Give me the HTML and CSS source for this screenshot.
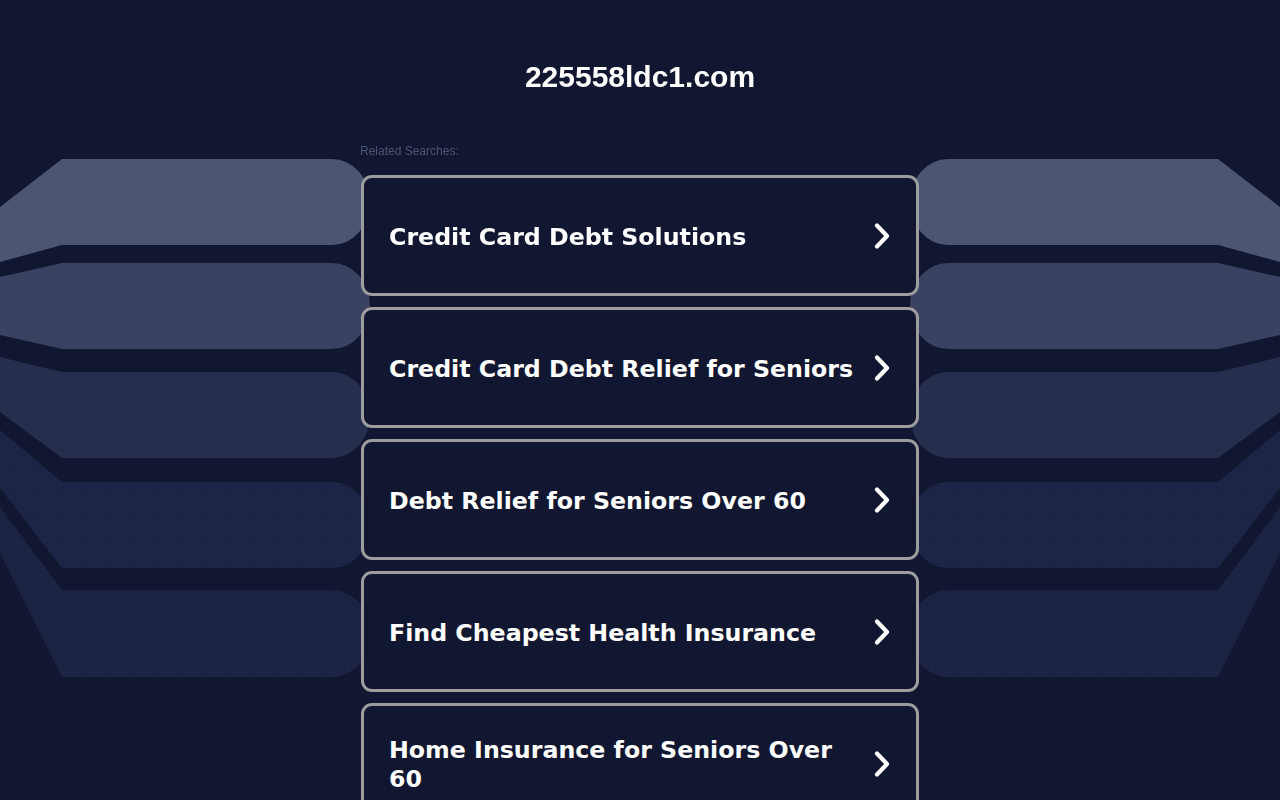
FILE: index.html
```html
<!DOCTYPE html>
<html lang="en">
<head>
<meta charset="utf-8">
<title>225558ldc1.com</title>
<link rel="stylesheet" href="styles.css">
</head>
<body>
<svg class="backdrop" width="1280" height="800" viewBox="0 0 1280 800" aria-hidden="true">
  <defs>
    <pattern id="dots" width="3" height="3" patternUnits="userSpaceOnUse">
      <rect width="3" height="3" fill="#1c2445"/>
      <rect x="1" y="1" width="1" height="1" fill="#232c50"/>
    </pattern>
    <g id="bands">
      <path d="M0,207 L62,159 L332,159 A38,43 0 0 1 332,245 L62,245 L0,262 Z" fill="#4c5572"/>
      <path d="M0,277 L62,263 L332,263 A38,43 0 0 1 332,349 L62,349 L0,335 Z" fill="#3a4261"/>
      <path d="M0,357 L62,372 L332,372 A38,43 0 0 1 332,458 L62,458 L0,412 Z" fill="#262e4e"/>
      <path d="M0,430 L62,482 L332,482 A38,43 0 0 1 332,568 L62,568 L0,488 Z" fill="url(#dots)"/>
      <path d="M0,507 L62,590 L332,590 A38,43 0 0 1 332,677 L62,677 L0,553 Z" fill="url(#dots)" opacity="0.92"/>
    </g>
  </defs>
  <use href="#bands"/>
  <use href="#bands" transform="translate(1280,0) scale(-1,1)"/>
</svg>

<main class="page">
  <h1 class="domain">225558ldc1.com</h1>
  <section class="related">
    <p class="related-label">Related Searches:</p>
    <ul class="links">
      <li><a class="link-card" href="#"><span class="link-text">Credit Card Debt Solutions</span><svg class="chev" width="16" height="26" viewBox="0 0 16 26"><path d="M3,2.5 L13,13 L3,23.5"/></svg></a></li>
      <li><a class="link-card" href="#"><span class="link-text">Credit Card Debt Relief for Seniors</span><svg class="chev" width="16" height="26" viewBox="0 0 16 26"><path d="M3,2.5 L13,13 L3,23.5"/></svg></a></li>
      <li><a class="link-card" href="#"><span class="link-text">Debt Relief for Seniors Over 60</span><svg class="chev" width="16" height="26" viewBox="0 0 16 26"><path d="M3,2.5 L13,13 L3,23.5"/></svg></a></li>
      <li><a class="link-card" href="#"><span class="link-text">Find Cheapest Health Insurance</span><svg class="chev" width="16" height="26" viewBox="0 0 16 26"><path d="M3,2.5 L13,13 L3,23.5"/></svg></a></li>
      <li><a class="link-card" href="#"><span class="link-text">Home Insurance for Seniors Over 60</span><svg class="chev" width="16" height="26" viewBox="0 0 16 26"><path d="M3,2.5 L13,13 L3,23.5"/></svg></a></li>
    </ul>
  </section>
</main>
</body>
</html>
```

FILE: styles.css
```css
html, body {
  margin: 0;
  padding: 0;
  background: #111730;
  height: 100%;
  overflow: hidden;
}

body {
  font-family: "Liberation Sans", Arial, sans-serif;
  color: #ffffff;
}

.backdrop {
  position: fixed;
  left: 0;
  top: 0;
  z-index: 0;
}

.page {
  position: relative;
  z-index: 1;
  width: 558px;
  margin: 0 auto;
  display: flex;
  flex-direction: column;
}

.domain {
  margin: 0;
  padding-top: 59px;
  font-size: 30px;
  line-height: 36px;
  font-weight: bold;
  text-align: center;
  color: #ffffff;
}

.related {
  margin-top: 49px;
}

.related-label {
  margin: 0 0 0 -1px;
  font-size: 12px;
  line-height: 14px;
  color: #4b5573;
}

.links {
  list-style: none;
  margin: 17px 0 0 0;
  padding: 0;
  display: flex;
  flex-direction: column;
  gap: 11px;
}

.link-card {
  box-sizing: border-box;
  height: 121px;
  display: flex;
  align-items: center;
  gap: 10px;
  padding: 0 26px 0 25px;
  border: 3px solid #9d9d9f;
  border-radius: 11px;
  background: #111730;
  color: #ffffff;
  text-decoration: none;
}

.link-text {
  flex: 1;
  padding-top: 3px;
  font-family: "DejaVu Sans", Verdana, sans-serif;
  font-weight: bold;
  font-size: 23.7px;
  line-height: 29px;
}

.chev {
  flex: none;
  fill: none;
  stroke: #ffffff;
  stroke-width: 4.2;
  stroke-linecap: round;
  stroke-linejoin: round;
}
```
